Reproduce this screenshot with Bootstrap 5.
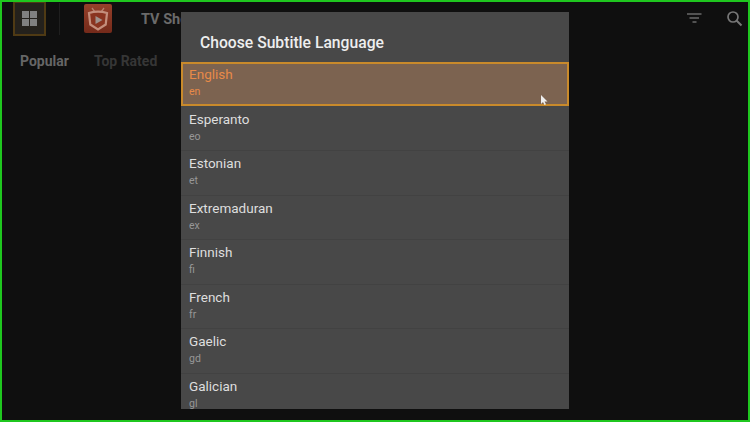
<!DOCTYPE html>
<html lang="en">
<head>
<meta charset="utf-8">
<title>Choose Subtitle Language</title>
<link href="https://cdn.jsdelivr.net/npm/bootstrap@5.3.0/dist/css/bootstrap.min.css" rel="stylesheet">
<style>
html,body{margin:0;height:422px;overflow:hidden;background:#0e0e0e;font-family:Roboto,"Liberation Sans",sans-serif}
.stage{position:relative;width:750px;height:422px;border:2px solid #1fc71f;background:#0f0f0f;overflow:hidden}
.topbar{height:34px;padding-left:11px}
.appsbtn{width:33px;height:35px;margin-top:-2px;border:2px solid #4f3a14;background:#24211c}
.sep{width:1px;height:32px;background:#1f1f1f;margin-left:13px;margin-right:24px}
.logo{width:28px;height:29px;margin-top:-1px;background:linear-gradient(#96402a,#742a1a);border-radius:2px}
.ttl{margin-left:29px;margin-top:1px;font-size:14.5px;font-weight:700;color:#6a6a6a}
.rightic{position:absolute;right:0;top:0;line-height:0}
.tabs{padding:15px 0 0 18px;gap:25px;font-size:14px;font-weight:700}
.tabon{color:#666}.taboff{color:#363636}
.dlg{position:absolute;left:179px;top:10px;width:388px;height:397px;background:#484848;overflow:hidden}
.dlghead{height:50px;padding:21px 0 0 19px;font-size:15.7px;font-weight:500;line-height:19px;color:#eee}
.langs{border-radius:0;--bs-list-group-bg:transparent;--bs-list-group-border-width:0}
.lang{height:44.5px;padding:4px 8px 0;background:transparent;border:0;border-bottom:1px solid #424242!important;color:#dedede;font-size:13.5px;line-height:16px}
.code{display:block;margin-top:3px;font-size:10.5px;line-height:14px;color:#979797}
.lang.sel{position:relative;background:#7c6350;border:2px solid #c98a2b!important;padding:2px 6px 0;height:44px;margin-bottom:.5px;color:#e88a48}
.lang.sel .code{color:#e88a48}
.cursor{position:absolute;left:358px;top:31px}
</style>
</head>
<body>
<div class="stage">
  <div class="topbar d-flex align-items-center">
    <div class="appsbtn d-flex align-items-center justify-content-center">
      <svg width="15" height="15" viewBox="0 0 15 15" fill="#808080"><rect width="7" height="7"/><rect x="8" width="7" height="7"/><rect y="8" width="7" height="7"/><rect x="8" y="8" width="7" height="7"/></svg>
    </div>
    <div class="sep"></div>
    <div class="logo d-flex align-items-center justify-content-center">
      <svg width="24" height="26" viewBox="0 0 24 26" fill="none"><path d="M8.500 5.500 6 2M15.500 5.500 18 2" stroke="#b57f6c" stroke-width="1.300"/><path d="M3 7c6-1.800 12-1.800 18 0l-1.300 11.500L12 23.500 4.300 18.500z" stroke="#c48e7c" stroke-width="2.200" fill="#8a3420"/><path d="M9.500 10v8l7-4z" fill="#a0928c"/></svg>
    </div>
    <div class="ttl">TV Shows</div>
    <div class="rightic">
      <svg width="70" height="30" viewBox="0 0 70 30" fill="none"><path d="M9 12h14.500M11.500 16h9.500M14.500 20h4" stroke="#6a6a6a" stroke-width="1.600"/><circle cx="55" cy="15" r="5" stroke="#777" stroke-width="1.700"/><path d="M58.500 18.500l5 5" stroke="#777" stroke-width="2"/></svg>
    </div>
  </div>
  <div class="tabs d-flex">
    <span class="tabon">Popular</span>
    <span class="taboff">Top Rated</span>
  </div>
  <div class="dlg">
    <div class="dlghead">Choose Subtitle Language</div>
    <div class="list-group langs">
      <div class="list-group-item lang sel">English<span class="code">en</span>
        <svg class="cursor" width="7" height="10" viewBox="0 0 7 10"><path d="M0 0v9l2-2 1.500 3 1.500-.7L3.500 6.500H6.500z" fill="#eee"/></svg>
      </div>
      <div class="list-group-item lang">Esperanto<span class="code">eo</span></div>
      <div class="list-group-item lang">Estonian<span class="code">et</span></div>
      <div class="list-group-item lang">Extremaduran<span class="code">ex</span></div>
      <div class="list-group-item lang">Finnish<span class="code">fi</span></div>
      <div class="list-group-item lang">French<span class="code">fr</span></div>
      <div class="list-group-item lang">Gaelic<span class="code">gd</span></div>
      <div class="list-group-item lang">Galician<span class="code">gl</span></div>
    </div>
  </div>
</div>
<script src="https://cdn.jsdelivr.net/npm/bootstrap@5.3.0/dist/js/bootstrap.bundle.min.js"></script>
</body>
</html>
